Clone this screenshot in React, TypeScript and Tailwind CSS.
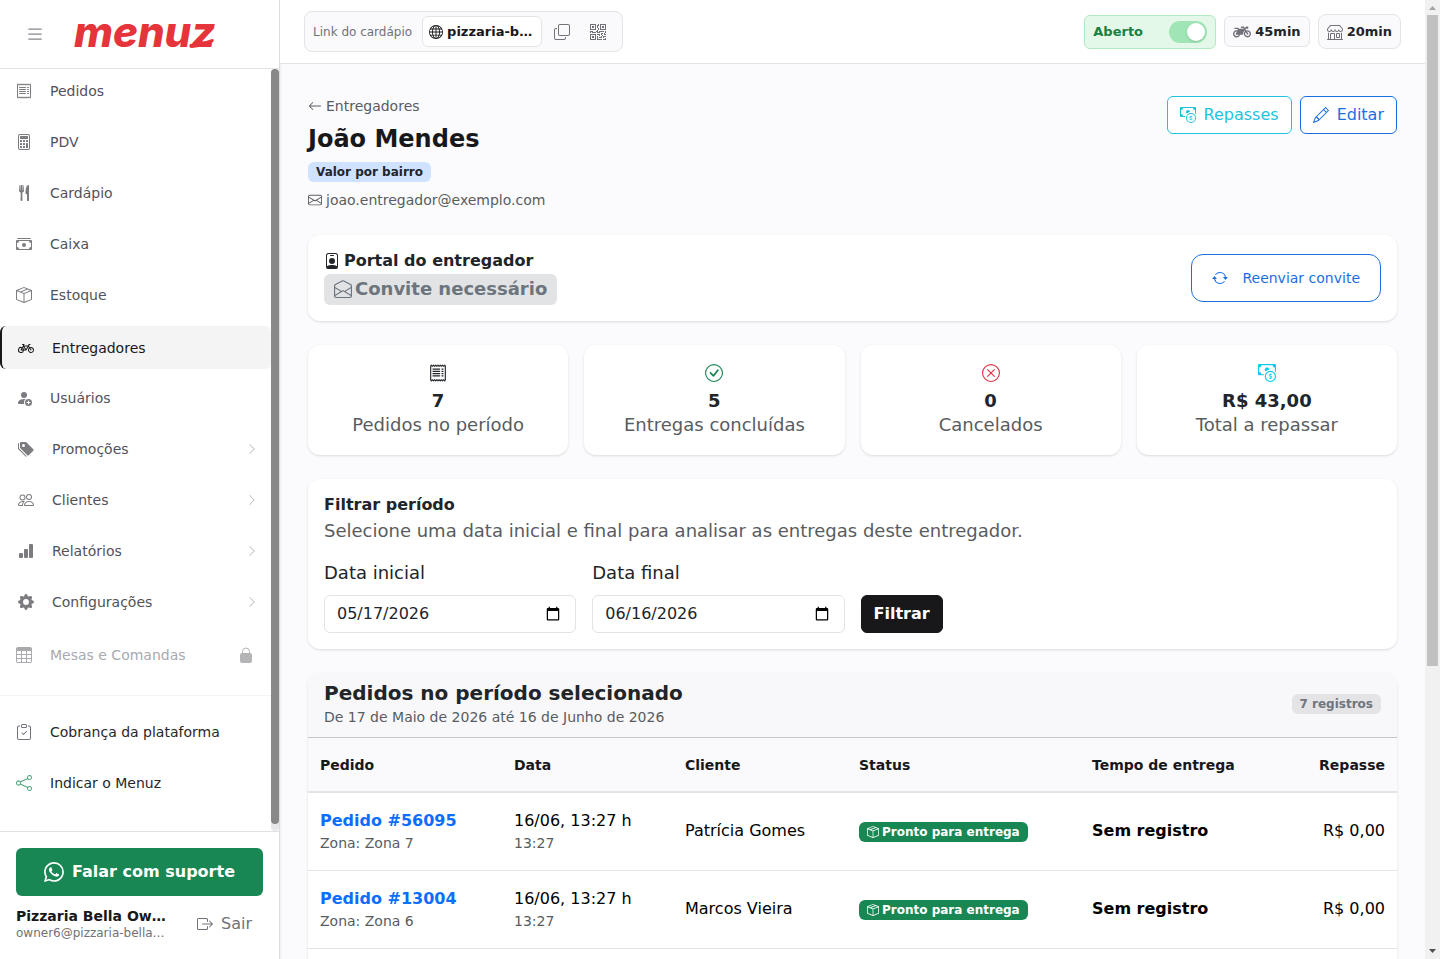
// src/App.tsx
import type { ComponentType } from "react";
// icons
import {
  BsArrowLeft,
  BsArrowRepeat,
  BsBarChartFill,
  BsBicycle,
  BsBoxArrowRight,
  BsBoxSeam,
  BsCalculator,
  BsCashCoin,
  BsCashStack,
  BsCheckCircle,
  BsChevronRight,
  BsClipboardCheck,
  BsCopy,
  BsEnvelope,
  BsEnvelopeOpen,
  BsGearFill,
  BsGlobe,
  BsList,
  BsPencil,
  BsPeople,
  BsPersonBadge,
  BsPersonFillAdd,
  BsQrCode,
  BsReceipt,
  BsShare,
  BsShop,
  BsTable,
  BsTagsFill,
  BsWhatsapp,
  BsXCircle,
} from "react-icons/bs";
import { FaMotorcycle } from "react-icons/fa";

type MenuItem = {
  label: string;
  icon: ComponentType<{ className?: string }>;
  active?: boolean;
  submenu?: boolean;
};

const menu: MenuItem[] = [
  { label: "Pedidos", icon: BsReceipt },
  { label: "PDV", icon: BsCalculator },
  { label: "Cardápio", icon: ForkKnifeIcon },
  { label: "Caixa", icon: BsCashStack },
  { label: "Estoque", icon: BsBoxSeam },
  { label: "Entregadores", icon: BsBicycle, active: true },
  { label: "Usuários", icon: BsPersonFillAdd },
  { label: "Promoções", icon: BsTagsFill, submenu: true },
  { label: "Clientes", icon: BsPeople, submenu: true },
  { label: "Relatórios", icon: BsBarChartFill, submenu: true },
  { label: "Configurações", icon: BsGearFill, submenu: true },
];

const stats = [
  { icon: BsReceipt, color: "text-[#212529]", value: "7", label: "Pedidos no período" },
  { icon: BsCheckCircle, color: "text-[#198754]", value: "5", label: "Entregas concluídas" },
  { icon: BsXCircle, color: "text-[#dc3545]", value: "0", label: "Cancelados" },
  { icon: BsCashCoin, color: "text-[#0dcaf0]", value: "R$ 43,00", label: "Total a repassar" },
];

const orders = [
  { id: "56095", zone: "Zona 7", date: "16/06, 13:27 h", time: "13:27", client: "Patrícia Gomes" },
  { id: "13004", zone: "Zona 6", date: "16/06, 13:27 h", time: "13:27", client: "Marcos Vieira" },
  { id: "48210", zone: "Zona 3", date: "16/06, 13:27 h", time: "13:27", client: "Ana Souza" },
];

function Logo() {
  return (
    <svg viewBox="0 0 150 52" className="h-[52px] w-[150px]" role="img" aria-label="menuz">
      <text
        x="1"
        y="39"
        fontFamily="Inter, sans-serif"
        fontSize="42"
        fontWeight="800"
        fontStyle="italic"
        fill="#e5343a"
      >
        menuz
      </text>
      {/* tail of the z */}
      <path d="M117 36 Q129 35 139 31 Q142 31 140 34 Q130 39 119 40 Q115 40 117 36Z" fill="#e5343a" />
    </svg>
  );
}

function ForkKnifeIcon({ className }: { className?: string }) {
  return (
    <svg viewBox="0 0 16 16" fill="currentColor" className={className} aria-hidden="true">
      <path d="M13 .5c0-.276-.226-.506-.498-.465-1.703.257-2.94 2.012-3 8.462a.5.5 0 0 0 .498.5c.56.01 1 .13 1 1.003v5.5a.5.5 0 0 0 .5.5h1a.5.5 0 0 0 .5-.5zM4.25 0a.25.25 0 0 1 .25.25v5.122a.128.128 0 0 0 .256.006l.233-5.14A.25.25 0 0 1 5.24 0h.522a.25.25 0 0 1 .25.238l.233 5.14a.128.128 0 0 0 .256-.006V.25A.25.25 0 0 1 6.75 0h.29a.5.5 0 0 1 .498.458l.423 5.07a1.69 1.69 0 0 1-1.059 1.711l-.053.022a.92.92 0 0 0-.58.884L6.47 15a.971.971 0 1 1-1.942 0l.202-6.855a.92.92 0 0 0-.58-.884l-.053-.022a1.69 1.69 0 0 1-1.059-1.712L3.462.458A.5.5 0 0 1 3.96 0z" />
    </svg>
  );
}

function LockIcon() {
  return (
    <svg viewBox="0 0 16 16" className="size-4 text-[#b5b5b8]" aria-hidden="true">
      <rect x="2" y="6" width="12" height="10" rx="2" fill="currentColor" />
      <path d="M4.5 7V4.5a3.5 3.5 0 0 1 7 0V7" fill="none" stroke="currentColor" />
    </svg>
  );
}

function SidebarItem({ item }: { item: MenuItem }) {
  const Icon = item.icon;
  return (
    <a
      href="#"
      className={
        item.active
          ? "mt-0.5 flex h-[43px] items-center gap-[18px] rounded-md border-l-2 border-[#18181b] bg-[#f4f4f5] pl-4 text-[#18181b]"
          : item.submenu
            ? "flex h-11 items-center gap-[18px] pr-[13px] pl-[18px] text-[#52525b]"
            : "flex h-11 items-center gap-[18px] pl-4 text-[#52525b]"
      }
    >
      <Icon className={item.active ? "size-4" : "size-4 text-[#7c7c80]"} />
      <span className="grow">{item.label}</span>
      {item.submenu && <BsChevronRight className="size-3 text-[#b5b5ba]" />}
    </a>
  );
}

function Sidebar() {
  return (
    <aside className="flex w-[280px] shrink-0 flex-col border-r border-[#dcdce0] bg-white shadow-sm">
      <div className="flex h-[69px] shrink-0 items-center gap-7 border-b border-[#e4e4e7] pl-[25px]">
        <button aria-label="Menu">
          <BsList className="size-5 text-[#85858f]" />
        </button>
        <Logo />
      </div>

      {/* Menu */}
      <div className="flex min-h-0 grow">
        <nav className="flex grow flex-col overflow-hidden text-sm">
          <div className="flex flex-col gap-[7px]">
            {menu.map((item) => (
              <SidebarItem key={item.label} item={item} />
            ))}
            <a href="#" className="flex h-12 items-center gap-[18px] pr-[17px] pl-4 text-[#a9a9ae]">
              <BsTable className="size-4" />
              <span className="grow">Mesas e Comandas</span>
              <LockIcon />
            </a>
          </div>
          <div className="mt-4 flex flex-col gap-[7px] border-t border-[#f4f4f5] pt-3.5 text-[#27272a]">
            <a href="#" className="flex h-11 items-center gap-[18px] pl-4">
              <BsClipboardCheck className="size-4 text-[#71717a]" />
              Cobrança da plataforma
            </a>
            <a href="#" className="flex h-11 items-center gap-[18px] pl-4">
              <BsShare className="size-4 text-[#52a880]" />
              Indicar o Menuz
            </a>
          </div>
        </nav>
        <div className="w-2 shrink-0 rounded bg-[#e8e8e8] pb-[7px]">
          <div className="h-full rounded bg-[#888]" />
        </div>
      </div>

      {/* Support and account */}
      <div className="shrink-0 border-t border-[#dee2e6] px-4 pt-4 pb-[18px]">
        <button className="flex h-12 w-full items-center justify-center gap-2 rounded-md bg-[#198754] font-bold text-white">
          <BsWhatsapp className="size-5" />
          Falar com suporte
        </button>
        <div className="mt-[11px] flex items-center gap-5">
          <div className="w-[157px]">
            <p className="truncate text-sm leading-[18px] font-bold text-[#18181b]">
              Pizzaria Bella Owner
            </p>
            <p className="truncate text-xs text-[#71717a]">owner6@pizzaria-bellamassa.com</p>
          </div>
          <button className="flex items-center gap-2 pl-1 text-[#71717a]">
            <BsBoxArrowRight className="size-4" />
            Sair
          </button>
        </div>
      </div>
    </aside>
  );
}

function Topbar() {
  return (
    <header className="flex h-16 shrink-0 items-center justify-between border-b border-[#e4e4e7] bg-white px-6 text-[13px]">
      <div className="flex h-[41px] items-center rounded-lg border border-[#e4e4e7] bg-[#fafafc] px-2">
        <span className="text-xs text-[#71717a]">Link do cardápio</span>
        <a
          href="#"
          className="ml-2.5 flex h-[31px] w-[120px] items-center gap-1 rounded-md border border-[#e4e4e7] bg-white px-1.5 font-bold text-[#18181b]"
        >
          <BsGlobe className="size-3.5 shrink-0" />
          <span className="truncate">pizzaria-bella</span>
        </a>
        <button aria-label="Copiar link" className="ml-2.5 px-0.5">
          <BsCopy className="size-4 text-[#71717a]" />
        </button>
        <button aria-label="QR Code" className="ml-4 px-0.5 pr-2">
          <BsQrCode className="size-4 text-[#71717a]" />
        </button>
      </div>

      <div className="flex items-center gap-2 font-bold">
        <label className="flex h-[34px] w-[132px] items-center justify-between rounded-md border border-[#b0eac2] bg-[#e3f8e9] px-2 text-[#198043]">
          Aberto
          <input
            type="checkbox"
            role="switch"
            defaultChecked
            className="flex h-[22px] w-[38px] appearance-none items-center justify-end rounded-full bg-[#9fe5b5] px-0.5 before:size-[18px] before:rounded-full before:bg-white before:shadow"
          />
        </label>
        <button className="flex h-[31px] items-center gap-1 rounded-md border border-[#e4e4e7] bg-[#fafafc] px-2 text-[#212529]">
          <FaMotorcycle className="size-[18px] text-[#71717a]" />
          45min
        </button>
        <button className="flex h-[35px] items-center gap-1 rounded-lg border border-[#e4e4e7] bg-[#fafafc] px-2 text-[#212529]">
          <BsShop className="size-4 text-[#71717a]" />
          20min
        </button>
      </div>
    </header>
  );
}

function DateField({ id, label, value }: { id: string; label: string; value: string }) {
  return (
    <div>
      <label htmlFor={id} className="mb-[9px] block text-lg leading-[27px]">
        {label}
      </label>
      <input
        id={id}
        type="date"
        defaultValue={value}
        className="h-[38px] w-full rounded-md border border-[#e4e4e7] bg-white px-3 [&::-webkit-datetime-edit-day-field]:p-0 [&::-webkit-datetime-edit-fields-wrapper]:p-0 [&::-webkit-datetime-edit-month-field]:p-0 [&::-webkit-datetime-edit-year-field]:p-0"
      />
    </div>
  );
}

function OrdersCard() {
  return (
    <section className="mt-6 overflow-hidden rounded-xl bg-white shadow-sm">
      <div className="flex items-center justify-between border-b border-[#c6c7c8] bg-[#f8f8fa] px-4 pt-2 pb-2.5">
        <div>
          <h2 className="text-xl leading-6 font-bold">Pedidos no período selecionado</h2>
          <p className="mt-0.5 text-sm text-[#595c5f]">
            De 17 de Maio de 2026 até 16 de Junho de 2026
          </p>
        </div>
        <span className="rounded-md bg-[#e4e4e7] px-2 py-1 text-xs leading-3 font-bold text-[#71757a]">
          7 registros
        </span>
      </div>
      <table className="w-full text-left text-black">
        <thead className="bg-[#fafafc] text-sm text-[#18181b]">
          <tr className="h-[54px] border-b-2 border-[#e4e4e7]">
            <th className="w-[194px] px-3">Pedido</th>
            <th className="w-[171px] px-3">Data</th>
            <th className="w-[174px] px-3">Cliente</th>
            <th className="w-[233px] px-3">Status</th>
            <th className="px-3">Tempo de entrega</th>
            <th className="px-3 text-right">Repasse</th>
          </tr>
        </thead>
        <tbody>
          {orders.map((order) => (
            <tr key={order.id} className="h-[78px] border-b border-[#e4e4e7]">
              <td className="px-3">
                <a href="#" className="font-bold text-[#0d6efd]">
                  Pedido #{order.id}
                </a>
                <div className="text-sm text-[#595c5f]">Zona: {order.zone}</div>
              </td>
              <td className="px-3">
                <div>{order.date}</div>
                <div className="text-sm text-[#595c5f]">{order.time}</div>
              </td>
              <td className="px-3">{order.client}</td>
              <td className="px-3">
                <span className="mt-0.5 flex w-fit items-center gap-[3px] rounded-md bg-[#198754] px-2 py-1 text-xs leading-3 font-bold text-white">
                  <BsBoxSeam className="size-3" />
                  Pronto para entrega
                </span>
              </td>
              <td className="px-3 font-bold">Sem registro</td>
              <td className="px-3 text-right">R$ 0,00</td>
            </tr>
          ))}
        </tbody>
      </table>
    </section>
  );
}

export default function App() {
  return (
    <div className="flex h-screen overflow-hidden bg-[#fbfbfe] font-['DejaVu_Sans',sans-serif] text-[#212529]">
      <Sidebar />

      <div className="flex min-w-0 grow flex-col">
        <Topbar />

        <main className="min-h-0 grow overflow-hidden px-7 pt-8">
          {/* Title */}
          <div className="flex items-start justify-between">
            <div>
              <a href="#" className="flex items-center gap-1 text-sm text-[#595c5f]">
                <BsArrowLeft className="size-3.5" />
                Entregadores
              </a>
              <h1 className="mt-2 text-2xl leading-[30px] font-bold text-[#18181b]">João Mendes</h1>
              <span className="mt-2 inline-block rounded-md bg-[#cfe2ff] px-2 py-1 align-top text-xs leading-3 font-bold">
                Valor por bairro
              </span>
              <p className="mt-2 flex items-center gap-1 text-sm text-[#595c5f]">
                <BsEnvelope className="size-3.5" />
                joao.entregador@exemplo.com
              </p>
            </div>
            <div className="flex gap-2">
              <button className="flex h-[38px] items-center gap-2 rounded-md border border-[#1fc3e0] bg-white px-3 text-[#1fc3e0]">
                <BsCashCoin className="size-4" />
                Repasses
              </button>
              <button className="flex h-[38px] items-center gap-2 rounded-md border border-[#1b6fe0] bg-white px-3 text-[#1b6fe0]">
                <BsPencil className="size-4" />
                Editar
              </button>
            </div>
          </div>

          {/* Portal */}
          <section className="mt-[25px] flex items-center justify-between rounded-xl bg-white p-4 shadow-sm">
            <div>
              <h2 className="flex items-center gap-1 leading-5 font-bold">
                <BsPersonBadge className="size-4" />
                Portal do entregador
              </h2>
              <span className="mt-[3px] inline-flex h-[31px] items-center gap-[3px] rounded-md bg-[#e2e3e5] px-2.5 pb-0.5 align-top text-lg font-bold text-[#6c757d]">
                <BsEnvelopeOpen className="size-[18px]" />
                Convite necessário
              </span>
            </div>
            <button className="flex h-12 items-center gap-3.5 rounded-xl border border-[#1b6fe0] px-5 text-sm text-[#1b6fe0]">
              <BsArrowRepeat className="size-4" />
              Reenviar convite
            </button>
          </section>

          {/* Stats */}
          <div className="mt-6 grid grid-cols-4 gap-4">
            {stats.map((stat) => (
              <div
                key={stat.label}
                className="flex h-[110px] flex-col items-center rounded-xl bg-white pt-[19px] text-lg leading-6 shadow-sm"
              >
                <stat.icon className={`size-[18px] ${stat.color}`} />
                <strong className="mt-[7px]">{stat.value}</strong>
                <span className="text-[#595c5f]">{stat.label}</span>
              </div>
            ))}
          </div>

          {/* Filter */}
          <section className="mt-6 rounded-xl bg-white p-4 shadow-sm">
            <h2 className="leading-5 font-bold">Filtrar período</h2>
            <p className="mt-0.5 text-lg text-[#595c5f]">
              Selecione uma data inicial e final para analisar as entregas deste entregador.
            </p>
            <form className="mt-3.5 grid grid-cols-4 items-end gap-4">
              <DateField id="data-inicial" label="Data inicial" value="2026-05-17" />
              <DateField id="data-final" label="Data final" value="2026-06-16" />
              <div>
                <button
                  type="button"
                  className="block h-[38px] rounded-md border border-[#18181b] bg-[#18181b] px-3 font-bold text-white"
                >
                  Filtrar
                </button>
              </div>
            </form>
          </section>

          <OrdersCard />
        </main>
      </div>

      {/* Page scrollbar */}
      <div className="flex w-[15px] shrink-0 flex-col items-center justify-between bg-[#f1f1f1]">
        <div className="flex min-h-0 grow flex-col items-center">
          <svg viewBox="0 0 15 15" className="size-[15px] shrink-0">
            <path d="M4 10 L7.5 6 L11 10Z" fill="#a3a3a3" />
          </svg>
          <div className="h-[69%] w-[11px] bg-[#c1c1c1]" />
        </div>
        <svg viewBox="0 0 15 15" className="size-[15px] shrink-0">
          <path d="M4 5 L7.5 9 L11 5Z" fill="#505050" />
        </svg>
      </div>
    </div>
  );
}
